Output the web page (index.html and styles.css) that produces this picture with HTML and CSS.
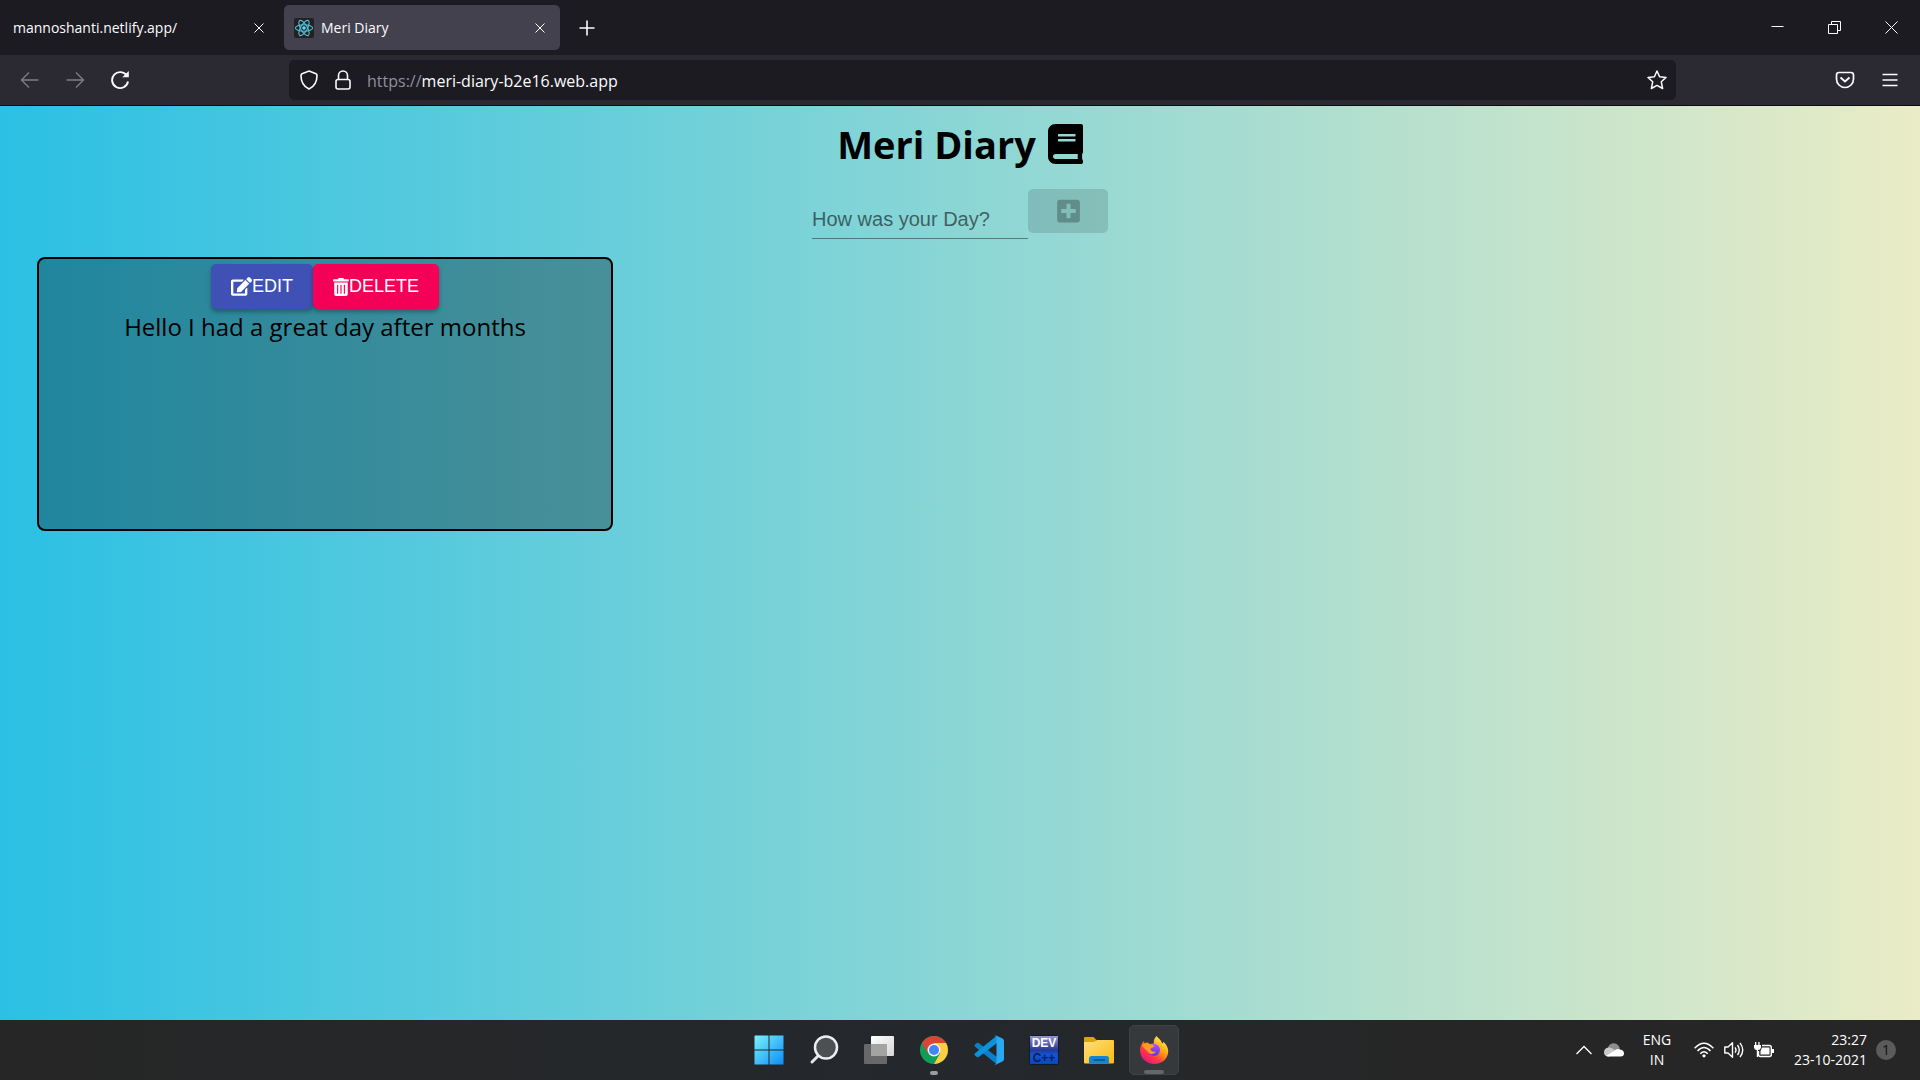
FILE: index.html
```html
<!DOCTYPE html>
<html lang="en">
<head>
    <meta charset="UTF-8">
    <title>Meri Diary</title>
    <link rel="stylesheet" href="styles.css">
</head>
<body>
<!-- browser -->
<div class="tabs">
    <div class="tab">
        <span class="tab-title">mannoshanti.netlify.app/</span>
        <button class="tab-close" aria-label="Close tab"><svg width="10" height="10" viewBox="0 0 10 10"><path d="M.5.5l9 9M9.5.5l-9 9"/></svg></button>
    </div>
    <div class="tab active">
        <svg class="favicon" width="20" height="20" viewBox="0 0 20 20">
            <rect width="20" height="20" rx="2" fill="#222"/>
            <g fill="none" stroke="#53c1de" stroke-width="1.1">
                <ellipse cx="10" cy="10" rx="8.6" ry="3.3"/>
                <ellipse cx="10" cy="10" rx="8.6" ry="3.3" transform="rotate(60 10 10)"/>
                <ellipse cx="10" cy="10" rx="8.6" ry="3.3" transform="rotate(120 10 10)"/>
            </g>
            <circle cx="10" cy="10" r="1.8" fill="#61dafb"/>
        </svg>
        <span class="tab-title">Meri Diary</span>
        <button class="tab-close" aria-label="Close tab"><svg width="10" height="10" viewBox="0 0 10 10"><path d="M.5.5l9 9M9.5.5l-9 9"/></svg></button>
    </div>
    <button class="new-tab" aria-label="New tab"><svg width="16" height="16" viewBox="0 0 16 16"><path stroke-width="1.600" d="M8 .5v15M.5 8h15"/></svg></button>
    <div class="window-buttons">
        <button aria-label="Minimize"><svg width="13" height="13" viewBox="0 0 13 13"><path d="M.5 5.5h12"/></svg></button>
        <button aria-label="Restore"><svg width="13" height="13" viewBox="0 0 13 13"><path d="M.5 3.5h9v9h-9zM3.5 3.5v-3h9v9h-3"/></svg></button>
        <button aria-label="Close"><svg width="13" height="13" viewBox="0 0 13 13"><path d="M.5.5l12 12M12.5.5l-12 12"/></svg></button>
    </div>
</div>
<div class="toolbar">
    <div class="nav">
        <button class="off" aria-label="Back"><svg width="20" height="20" viewBox="0 0 20 20"><path stroke-width="1.300" d="M18.500 10H2M9 2.500L1.500 10L9 17.500"/></svg></button>
        <button class="off" aria-label="Forward"><svg width="20" height="20" viewBox="0 0 20 20"><path stroke-width="1.300" d="M1.500 10H18M11 2.500L18.500 10L11 17.500"/></svg></button>
        <button aria-label="Reload"><svg width="20" height="20" viewBox="0 0 20 20"><path stroke-width="1.900" d="M17 6A8 8 0 1 0 18 11.500"/><path fill="#fbfbfe" stroke="none" d="M18.800 1v6.300h-6.500z"/></svg></button>
    </div>
    <div class="urlbar">
        <svg width="20" height="20" viewBox="0 0 20 20"><path stroke-width="1.600" d="M10 1L17 3.700Q18 4.200 18 5.500C18 12 14.500 17 10 19C5.500 17 2 12 2 5.500Q2 4.200 3 3.700z"/></svg>
        <svg width="20" height="20" viewBox="0 0 20 20"><rect stroke-width="1.600" x="3" y="9.500" width="14" height="9.500" rx="2"/><path stroke-width="1.600" d="M5.500 9.500V5.500a4.500 4.500 0 0 1 9 0V9.500"/></svg>
        <span class="url"><span class="scheme">https://</span>meri-diary-b2e16.web.app</span>
        <button aria-label="Bookmark this page"><svg width="20" height="20" viewBox="0 0 20 20"><path stroke-width="1.500" stroke-linejoin="round" d="M10 1L12.600 6.700L19 7.400L14.300 11.800L15.600 18.500L10 15.400L4.400 18.500L5.700 11.800L1 7.400L7.400 6.700z"/></svg></button>
    </div>
    <div class="tools">
        <button aria-label="Save to Pocket"><svg width="20" height="20" viewBox="0 0 20 20"><path stroke-width="1.700" d="M4 2.500H16Q18.500 2.500 18.500 5V9A8.500 8.500 0 0 1 1.500 9V5Q1.500 2.500 4 2.500z"/><path stroke-width="1.900" d="M5.500 7.500L10 11.500L14.500 7.500"/></svg></button>
        <button aria-label="Menu"><svg width="16" height="16" viewBox="0 0 16 16"><path stroke-width="1.400" d="M.5 2.500h15M.5 8h15M.5 13.500h15"/></svg></button>
    </div>
</div>

<!-- app -->
<main class="app">
    <h1>Meri Diary
        <svg width="35" height="40" viewBox="0 0 448 512"><path fill="currentColor" d="M448 360V24c0-13.300-10.700-24-24-24H96C43 0 0 43 0 96v320c0 53 43 96 96 96h328c13.300 0 24-10.700 24-24v-16c0-7.500-3.500-14.300-8.900-18.700-4.200-15.400-4.200-59.300 0-74.700 5.400-4.300 8.900-11.100 8.900-18.600zM128 134c0-3.300 2.700-6 6-6h212c3.300 0 6 2.700 6 6v20c0 3.300-2.700 6-6 6H134c-3.300 0-6-2.700-6-6v-20zm0 64c0-3.300 2.700-6 6-6h212c3.300 0 6 2.700 6 6v20c0 3.300-2.700 6-6 6H134c-3.300 0-6-2.700-6-6v-20zm253.400 250H96c-17.700 0-32-14.300-32-32 0-17.600 14.400-32 32-32h285.400c-1.900 17.100-1.900 46.900 0 64z"/></svg>
    </h1>
    <form class="entry">
        <input type="text" aria-label="How was your Day?" placeholder="How was your Day?">
        <button class="add" type="submit" aria-label="Add" disabled><svg width="23" height="26" viewBox="0 0 448 512"><path fill="currentColor" d="M400 32H48C21.500 32 0 53.500 0 80v352c0 26.500 21.500 48 48 48h352c26.500 0 48-21.500 48-48V80c0-26.500-21.500-48-48-48zm-32 252c0 6.600-5.400 12-12 12h-92v92c0 6.600-5.400 12-12 12h-56c-6.600 0-12-5.400-12-12v-92H92c-6.600 0-12-5.400-12-12v-56c0-6.600 5.400-12 12-12h92v-92c0-6.600 5.400-12 12-12h56c6.600 0 12 5.400 12 12v92h92c6.600 0 12 5.400 12 12v56z"/></svg></button>
    </form>
    <div class="cards">
        <div class="card">
            <div class="actions">
                <button class="btn edit"><svg width="21" height="19" viewBox="0 0 576 512"><path fill="currentColor" d="M402.600 83.200l90.200 90.200c3.800 3.800 3.800 10 0 13.800L274.400 405.600l-92.800 10.300c-12.400 1.400-22.900-9.100-21.500-21.500l10.300-92.800L388.800 83.200c3.800-3.800 10-3.800 13.800 0zm162-22.900l-48.800-48.800c-15.200-15.200-39.900-15.200-55.200 0l-35.400 35.400c-3.800 3.800-3.800 10 0 13.800l90.200 90.200c3.800 3.800 10 3.800 13.800 0l35.400-35.400c15.200-15.300 15.200-40 0-55.200zM384 346.200V448H64V128h229.800c3.200 0 6.200-1.300 8.500-3.500l40-40c7.600-7.600 2.200-20.500-8.500-20.500H48C21.500 64 0 85.500 0 112v352c0 26.500 21.500 48 48 48h352c26.500 0 48-21.500 48-48V306.200c0-10.700-12.900-16-20.500-8.500l-40 40c-2.200 2.300-3.500 5.300-3.500 8.500z"/></svg>EDIT</button>
                <button class="btn delete"><svg width="16" height="18" viewBox="0 0 448 512"><path fill="currentColor" d="M32 464a48 48 0 0 0 48 48h288a48 48 0 0 0 48-48V128H32zm272-256a16 16 0 0 1 32 0v224a16 16 0 0 1-32 0zm-96 0a16 16 0 0 1 32 0v224a16 16 0 0 1-32 0zm-96 0a16 16 0 0 1 32 0v224a16 16 0 0 1-32 0zM432 32H312l-9.400-18.700A24 24 0 0 0 281.100 0H166.800a23.700 23.700 0 0 0-21.400 13.300L136 32H16A16 16 0 0 0 0 48v32a16 16 0 0 0 16 16h416a16 16 0 0 0 16-16V48a16 16 0 0 0-16-16z"/></svg>DELETE</button>
            </div>
            <p>Hello I had a great day after months</p>
        </div>
    </div>
</main>

<!-- taskbar -->
<footer class="taskbar">
    <div class="pinned">
        <button aria-label="Start">
            <svg width="30" height="30" viewBox="0 0 30 30">
                <defs><linearGradient id="win" gradientUnits="userSpaceOnUse" x1="0" y1="0" x2="30" y2="30"><stop offset="0" stop-color="#7cf3ff"/><stop offset="1" stop-color="#0a8bf5"/></linearGradient></defs>
                <path fill="url(#win)" d="M1 .5h13.500v14H.5V1zM15.500.5h14v14h-14zM.5 15.500h14v14H.5zM15.500 15.500h14v14h-14z"/>
            </svg>
        </button>
        <button aria-label="Search">
            <svg width="30" height="30" viewBox="0 0 30 30"><path stroke="#e3e6e8" stroke-width="3" stroke-linecap="round" d="M11 19L3 27"/><circle cx="17" cy="12.500" r="11" fill="#4d5052" stroke="#eceff1" stroke-width="2.500"/></svg>
        </button>
        <button aria-label="Task view">
            <svg width="30" height="30" viewBox="0 0 30 30">
                <defs><linearGradient id="pane" x1="0" y1="0" x2="1" y2="1"><stop offset="0" stop-color="#fff"/><stop offset="1" stop-color="#d5d5d5"/></linearGradient></defs>
                <rect y="9" width="23" height="20" rx="1" fill="#686868"/><rect x="7" y="1" width="23" height="20" rx="1" fill="url(#pane)"/><path fill="#a3a3a3" d="M7 9h16v12H7z"/>
            </svg>
        </button>
        <button class="running" aria-label="Chrome">
            <svg width="28" height="28" viewBox="0 0 28 28">
                <circle cx="14" cy="14" r="14" fill="#0f9d58"/>
                <path fill="#ffcd40" d="M14 7H26.100A14 14 0 0 1 14 28L20 17.500z"/>
                <path fill="#db4437" d="M1.900 7A14 14 0 0 1 26.100 7H14L8 17.500z"/>
                <circle cx="14" cy="14" r="6.500" fill="#f1f1f1"/><circle cx="14" cy="14" r="5" fill="#4285f4"/>
            </svg>
        </button>
        <button aria-label="Visual Studio Code">
            <svg width="30" height="30" viewBox="0 0 30 30">
                <path fill="#0a7fcb" d="M1 9.500L3 8Q4 7.400 5 8.200L23 22v7.500L.8 11.500Q0 10.500 1 9.500z"/>
                <path fill="#0a93dc" d="M1 20.500L3 22Q4 22.600 5 21.800L23 8V.5L.8 18.500Q0 19.500 1 20.500z"/>
                <path fill="#29a9f2" d="M22 .6L28.500 3.500Q30 4.200 30 6V24Q30 25.800 28.500 26.500L22 29.500Q21 29.700 20.500 29Q22.500 29.500 22.500 27.500V2.500Q22.500.8 20.500 1z"/>
            </svg>
        </button>
        <button aria-label="Dev-C++">
            <svg class="dev" width="30" height="30" viewBox="0 0 30 30">
                <defs><linearGradient id="dev" x1="0" y1="0" x2="0" y2="1"><stop offset="0" stop-color="#9b9ad0"/><stop offset=".5" stop-color="#263796"/><stop offset=".65" stop-color="#1254d6"/><stop offset="1" stop-color="#0747bd"/></linearGradient></defs>
                <rect x=".5" y=".5" width="29" height="29" rx="1" fill="url(#dev)" stroke="#111a34"/>
                <text x="15" y="12" fill="#fff">DEV</text>
                <text x="15" y="27" fill="#0a2050">C++</text>
            </svg>
        </button>
        <button aria-label="File Explorer">
            <svg width="30" height="28" viewBox="0 0 30 28">
                <defs><linearGradient id="folder" x1="0" y1="0" x2="1" y2="1"><stop offset="0" stop-color="#ffe07a"/><stop offset="1" stop-color="#f9b912"/></linearGradient></defs>
                <path fill="#e0a012" d="M0 2Q0 1 1 1H9.500L12.500 4V10H0z"/>
                <path fill="url(#folder)" d="M0 6H10L13 4H29Q30 4 30 5V26.500Q30 27.500 29 27.500H1Q0 27.500 0 26.500z"/>
                <path fill="#1585d2" d="M5 27.500V22.500Q5 20 7.500 20H22.500Q25 20 25 22.500V27.500z"/><path stroke="#084f8c" stroke-width="1.500" d="M9.500 24H21"/>
            </svg>
        </button>
        <button class="running current" aria-label="Firefox">
            <svg width="30" height="30" viewBox="0 0 30 30">
                <defs>
                    <linearGradient id="fox" x1=".85" y1=".1" x2=".2" y2=".95"><stop offset="0" stop-color="#fff44f"/><stop offset=".4" stop-color="#ff980e"/><stop offset=".7" stop-color="#ff3647"/><stop offset="1" stop-color="#e31587"/></linearGradient>
                    <linearGradient id="globe" x1="0" y1="0" x2="0" y2="1"><stop offset="0" stop-color="#b14bff"/><stop offset="1" stop-color="#5b3fd6"/></linearGradient>
                </defs>
                <path fill="url(#fox)" d="M17.500 1C19 3 22 4.500 23 8C24.500 9 24.500 7.500 24.200 6.500C27 9 29.500 13 29.200 17C28.700 24 23 29 15.500 29C7.500 29 1.500 23.500 1 16C.8 12 2.500 8.500 5 6L5.500 8.500L8 7.300L10.500 9L15 8.500C14 6 15.500 3 17.500 1z"/>
                <circle cx="15" cy="15" r="6" fill="url(#globe)"/>
                <path fill="#ff9b20" d="M3 10C6 7.500 9.500 8 11.500 9.500L15.500 10.500C15 12.500 12.500 12.500 11.500 13.500C11.500 16 14 17.500 17 16.500C15.500 19.500 11 20 9 17C7.500 14.500 5 14 3 10z"/>
            </svg>
        </button>
    </div>
    <div class="tray">
        <svg class="up" width="16" height="10" viewBox="0 0 16 10"><path fill="none" stroke="#fff" stroke-width="1.300" d="M.5 9L8 1.500L15.500 9"/></svg>
        <svg class="cloud" width="20" height="14" viewBox="0 0 20 14"><path fill="#8d8d8d" d="M4 8A6 6 0 0 1 15.500 4.500L16 8z"/><path fill="#c9c9c9" d="M0 9.500Q0 5 4.500 4.500Q7 4 9 6L15 10L5 13.500Q0 13.500 0 9.500z"/><path fill="#fff" d="M2 13L10 8Q13 5 16 6.500Q20 7 20 10.500Q20 13.500 16.500 13.500H4z"/></svg>
        <div class="lang">ENG<br>IN</div>
        <div class="status">
            <svg width="20" height="16" viewBox="0 0 20 16" fill="none" stroke="#fff" stroke-width="1.500"><path d="M.6 6.200Q10-3.800 19.400 6.200M3.500 9Q10 2 16.500 9M6.300 11.700Q10 7.700 13.700 11.700"/><circle cx="10" cy="13.800" r="1.600" fill="#fff" stroke="none"/></svg>
            <svg width="20" height="18" viewBox="0 0 20 18" fill="none" stroke="#fff" stroke-width="1.400"><path stroke-linejoin="round" d="M.8 6H4L8.500 1.800V16.200L4 12H.8z"/><path d="M11 6.300Q13 9 11 11.700M13.500 4Q17 9 13.500 14M16 1.800Q21.500 9 16 16.200"/></svg>
            <svg width="20" height="16" viewBox="0 0 20 16"><path fill="none" stroke="#fff" stroke-width="1.400" d="M8 3.500H15.500Q17.300 3.500 17.300 5.500V12.500Q17.300 14.500 15.500 14.500H6.500Q4.500 14.500 4.500 12.500V9"/><path fill="#fff" d="M8 5.500H15.500V12.500H6.500V9zM18 7h2v4h-2zM0 3h1V0h1.300v3h2V0h1.300v3H7v2.500Q6.500 8 4 8V15H2.800V8Q.5 8 0 5.500z"/></svg>
        </div>
        <div class="clock">23:27<br>23-10-2021</div>
        <span class="badge">1</span>
    </div>
</footer>
</body>
</html>
```
FILE: styles.css
```css
* {
    margin: 0;
    padding: 0;
    box-sizing: border-box;
}

body {
    display: flex;
    flex-direction: column;
    min-height: 100vh;
    font-family: "Open Sans", sans-serif;
    color: #000;
}

button {
    border: 0;
    background: none;
    font: inherit;
    color: inherit;
    display: flex;
    align-items: center;
    justify-content: center;
}

svg {
    flex: none;
}

/* browser */
.tabs {
    display: flex;
    align-items: center;
    height: 55px;
    background-color: #1c1b22;
    color: #fbfbfe;
    font-size: 14px;
}

.tabs svg,
.toolbar svg {
    fill: none;
    stroke: #fbfbfe;
}

.tab {
    display: flex;
    align-items: center;
    width: 276px;
    height: 45px;
    padding: 0 15px 0 10px;
    border-radius: 5px;
}

.tab:first-child {
    width: 284px;
    padding: 0 20px 0 13px;
}

.tab.active {
    background-color: #42414d;
}

.tab svg.favicon {
    margin-right: 7px;
    stroke: none;
}

.tab-title {
    flex: 1;
}

.tab-close {
    width: 10px;
}

.new-tab {
    width: 54px;
    height: 45px;
}

.window-buttons {
    display: flex;
    margin-left: auto;
}

.window-buttons button {
    width: 57px;
    height: 45px;
}

.toolbar {
    display: flex;
    align-items: center;
    height: 51px;
    background-color: #2b2a33;
    border-bottom: 1px solid #0c0c0d;
}

.nav {
    display: flex;
    width: 289px;
    padding-left: 7px;
}

.nav button {
    width: 45px;
    height: 40px;
}

.nav .off {
    opacity: .4;
}

.urlbar {
    flex: 1;
    display: flex;
    align-items: center;
    gap: 14px;
    height: 40px;
    padding: 0 9px 0 10px;
    border-radius: 5px;
    background-color: #1c1b22;
}

.url {
    flex: 1;
    padding-top: 2px;
    font-size: 16px;
    color: #fbfbfe;
}

.scheme {
    color: #8f8f9d;
}

.tools {
    display: flex;
    justify-content: flex-end;
    width: 244px;
    padding-right: 8px;
}

.tools button {
    width: 45px;
    height: 40px;
}

/* app */
.app {
    flex: 1;
    padding: 12px 37px 0;
    background: linear-gradient(to right, #2bc0e4, #eaecc6);
}

h1 {
    display: flex;
    align-items: center;
    justify-content: center;
    gap: 12px;
    font-size: 38px;
    line-height: 52px;
    margin-bottom: 19px;
}

.entry {
    display: flex;
    justify-content: center;
    align-items: flex-start;
    font-family: "Liberation Sans", Arial, sans-serif;
}

.entry input {
    width: 216px;
    height: 50px;
    padding-top: 12px;
    border: 0;
    border-bottom: 1px solid rgba(0, 0, 0, .42);
    background: none;
    font: inherit;
    font-size: 20px;
    outline: none;
}

.entry input::placeholder {
    color: #000;
    opacity: .55;
}

.add {
    width: 80px;
    height: 44px;
    border-radius: 5px;
    background-color: rgba(0, 0, 0, .12);
    color: rgba(0, 0, 0, .26);
}

.cards {
    display: flex;
    margin-top: 18px;
}

.card {
    width: 576px;
    min-height: 274px;
    padding-top: 5px;
    border: 2px solid #000;
    border-radius: 8px;
    background-color: rgba(0, 0, 0, .3);
    text-align: center;
}

.actions {
    display: flex;
    justify-content: center;
}

.btn {
    height: 45px;
    padding: 0 20px;
    border-radius: 5px;
    color: #fff;
    font-family: "Liberation Sans", Arial, sans-serif;
    font-size: 18px;
    box-shadow: 0 3px 4px rgba(0, 0, 0, .3);
}

.edit {
    background-color: #3f51b5;
}

.delete {
    background-color: #f50057;
}

.card p {
    font-size: 24px;
    line-height: 36px;
}

/* taskbar */
.taskbar {
    display: grid;
    grid-template-columns: 1fr auto 1fr;
    align-items: center;
    height: 60px;
    background: linear-gradient(to right, #262626, #24282c 50%, #262626 75%);
    color: #fff;
}

.pinned {
    grid-column: 2;
    display: flex;
    gap: 5px;
    padding-left: 2px;
}

.pinned button {
    position: relative;
    width: 50px;
    height: 50px;
    border-radius: 5px;
}

.pinned .current {
    background-color: #35393b;
    border: 1px solid #3f4345;
}

/* pill under an open program */
.running::after {
    content: "";
    position: absolute;
    bottom: 0;
    width: 8px;
    height: 4px;
    border-radius: 2px;
    background-color: #9a9c9e;
}

.current::after {
    width: 20px;
    background-color: #646668;
}

.dev text {
    font: bold 12px "Liberation Sans", Arial, sans-serif;
    text-anchor: middle;
}

.tray {
    display: flex;
    align-items: center;
    justify-content: flex-end;
    padding-right: 24px;
    font-size: 14px;
    line-height: 20px;
}

.up {
    margin-right: 12px;
}

.lang {
    width: 66px;
    text-align: center;
}

.status {
    display: flex;
    align-items: center;
    gap: 10px;
    margin-left: 4px;
}

.clock {
    width: 93px;
    text-align: right;
}

.badge {
    width: 20px;
    height: 20px;
    margin-left: 9px;
    border-radius: 50%;
    background-color: #5b5b5b;
    color: #111;
    text-align: center;
}
```
